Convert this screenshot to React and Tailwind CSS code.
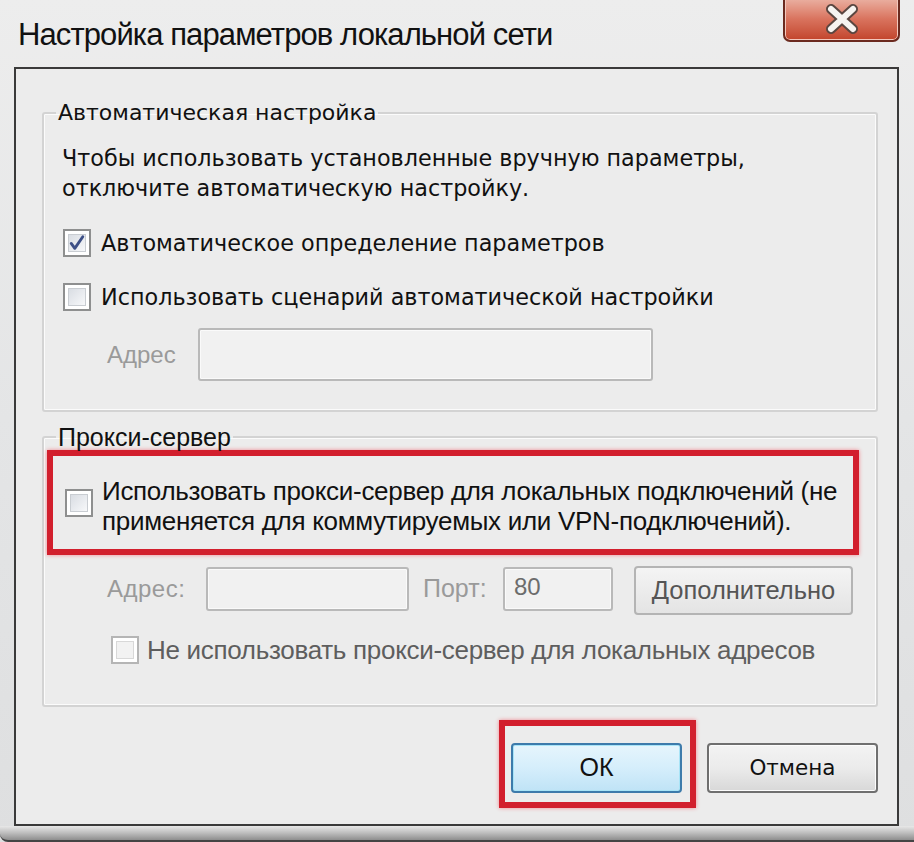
import React from "react";

const verdana = "font-['DejaVu_Sans','Verdana',sans-serif]";
const segoe = "font-['Liberation_Sans','Arial',sans-serif]";

// Win7-style checkbox, scaled like the screenshot
const CheckBox = ({ checked, disabled }) => (
  <div
    className={`w-[28px] h-[28px] shrink-0 border-2 ${disabled ? "border-[#b5b5b5]" : "border-[#8e8f8f]"} bg-white p-[3px]`}
  >
    <div
      className={`w-full h-full border ${disabled ? "border-[#d8d8d8] bg-[#f2f2f2]" : "border-[#c9cdd2] bg-gradient-to-br from-[#d9dde3] to-[#f7f8fa]"} flex items-center justify-center`}
    >
      {checked && (
        <svg width="18" height="18" viewBox="0 0 18 18">
          <path
            d="M2.5 9.5 L6.5 15 L15.5 2"
            fill="none"
            stroke="#3d4f86"
            strokeWidth="3.2"
            strokeLinejoin="round"
            strokeLinecap="round"
          />
        </svg>
      )}
    </div>
  </div>
);

const TextBox = ({ className, children }) => (
  <div
    className={`rounded-[3px] border-2 border-[#b9b9b9] bg-[#f1f1f1] shadow-[inset_0_0_0_1px_#fafafa] ${className}`}
  >
    {children}
  </div>
);

const App = () => {
  return (
    <div className="w-[914px] h-[842px] overflow-hidden bg-gradient-to-b from-[#ededed] via-[#e4e5e6] to-[#dedfe0] flex flex-col">
      {/* title bar */}
      <div className="h-[67px] flex justify-between shrink-0">
        <div
          className={`${segoe} text-[31px] tracking-[-0.9px] text-[#111] pl-[18px] pt-[16px] leading-[38px]`}
        >
          Настройка параметров локальной сети
        </div>
        <div className="mr-[14px] w-[117px] h-[44px] mt-[-2px] rounded-b-[7px] border-2 border-t-0 border-[#6b2a1f] bg-gradient-to-b from-[#eab2a4] via-[#d9735e] to-[#c2442b] flex items-center justify-center shadow-[inset_0_0_0_1px_#f3c8bd]">
          <svg width="36" height="30" viewBox="0 0 36 30">
            <path
              d="M7 5 L29 25 M29 5 L7 25"
              stroke="#5a4640"
              strokeWidth="10"
              strokeLinecap="round"
            />
            <path
              d="M7 5 L29 25 M29 5 L7 25"
              stroke="#f6f3f0"
              strokeWidth="6"
              strokeLinecap="round"
            />
          </svg>
        </div>
      </div>

      {/* client area */}
      <div className="ml-[14px] w-[885px] h-[759px] shrink-0 border-2 border-[#3a3a3a] bg-[#ececec] pt-[32px] pl-[26px] pr-[19px]">
        <fieldset className="h-[311px] rounded-[3px] border-2 border-[#d3d3d3] shadow-[inset_0_0_0_1px_#fbfbfb] px-[18px]">
          <legend className={`${verdana} text-[22px] leading-[24px] text-[#111] ml-[-6px] px-[2px]`}>
            Автоматическая настройка
          </legend>
          <p className={`${verdana} text-[22.3px] leading-[30px] text-[#111] mt-[18px]`}>
            Чтобы использовать установленные вручную параметры,
            <br />
            отключите автоматическую настройку.
          </p>
          <div className="flex items-center gap-[10px] mt-[25px] ml-[1px]">
            <CheckBox checked />
            <span className={`${verdana} text-[22.3px] leading-[30px] text-[#111]`}>
              Автоматическое определение параметров
            </span>
          </div>
          <div className="flex items-center gap-[10px] mt-[24px] ml-[1px]">
            <CheckBox />
            <span className={`${verdana} text-[22.3px] leading-[30px] text-[#111]`}>
              Использовать сценарий автоматической настройки
            </span>
          </div>
          <div className="flex items-center mt-[16px] ml-[45px]">
            <span className={`${segoe} text-[24px] text-[#9a9a9a] w-[91px]`}>Адрес</span>
            <TextBox className="w-[455px] h-[53px]" />
          </div>
        </fieldset>

        <fieldset className="mt-[13px] h-[282px] rounded-[3px] border-2 border-[#d3d3d3] shadow-[inset_0_0_0_1px_#fbfbfb] px-[18px]">
          <legend className={`${segoe} text-[25px] leading-[24px] text-[#111] ml-[-6px] px-[2px]`}>
            Прокси-сервер
          </legend>
          <div className="ml-[-15px] mr-[-1px] mt-[1px] h-[105px] border-[6px] border-[#d21f2d] shadow-[0_0_4px_#f08890] flex items-center gap-[9px] pl-[12px]">
            <CheckBox />
            <div className={`${segoe} text-[26px] leading-[30px] text-[#111] tracking-[-0.3px] mt-[7px]`}>
              Использовать прокси-сервер для локальных подключений (не
              <br />
              применяется для коммутируемых или VPN-подключений).
            </div>
          </div>
          <div className="flex items-center mt-[7px] ml-[45px]">
            <span className={`${segoe} text-[24px] tracking-[0.5px] text-[#9a9a9a] w-[99px]`}>Адрес:</span>
            <TextBox className="w-[203px] h-[44px]" />
            <span className={`${segoe} text-[25px] text-[#9a9a9a] ml-[14px] w-[80px]`}>Порт:</span>
            <TextBox className={`${segoe} w-[110px] h-[44px] text-[24px] text-[#6c6c6c] pl-[9px] leading-[36px]`}>
              80
            </TextBox>
            <div
              className={`${segoe} ml-[21px] mt-[4px] w-[219px] h-[49px] rounded-[4px] border-2 border-[#b4b4b4] bg-gradient-to-b from-[#f4f4f4] to-[#e4e4e4] flex items-center justify-center text-[25.5px] text-[#555]`}
            >
              Дополнительно
            </div>
          </div>
          <div className="flex items-center gap-[8px] mt-[20px] ml-[49px]">
            <CheckBox disabled />
            <span className={`${segoe} text-[26px] leading-[30px] text-[#5e5e5e] tracking-[-0.3px]`}>
              Не использовать прокси-сервер для локальных адресов
            </span>
          </div>
        </fieldset>

        {/* buttons */}
        <div className="flex justify-end items-start mt-[13px]">
          <div className="w-[197px] h-[88px] border-[6px] border-[#d21f2d] shadow-[0_0_4px_#f08890] pt-[17px] pl-[6px]">
            <div
              className={`${segoe} w-[171px] h-[50px] rounded-[4px] border-2 border-[#3d7bab] bg-gradient-to-b from-[#e6f5fc] via-[#d5eefb] to-[#bfe3f6] shadow-[inset_0_0_0_1px_#a8e4f7] flex items-center justify-center text-[25px] text-[#111]`}
            >
              ОК
            </div>
          </div>
          <div
            className={`${verdana} ml-[11px] mt-[23px] w-[171px] h-[50px] rounded-[4px] border-2 border-[#6f6f6f] bg-gradient-to-b from-[#f3f3f3] via-[#ebebeb] to-[#d8d8d8] shadow-[inset_0_0_0_1px_#fcfcfc] flex items-center justify-center text-[21.5px] text-[#111]`}
          >
            Отмена
          </div>
        </div>
      </div>

      {/* bottom frame */}
      <div className="flex-1 bg-gradient-to-b from-[#e8e8e8] via-[#bdbdbd] to-[#8e8e8e] border-b-2 border-[#444] rounded-bl-[8px]" />
    </div>
  );
};

export default App;
